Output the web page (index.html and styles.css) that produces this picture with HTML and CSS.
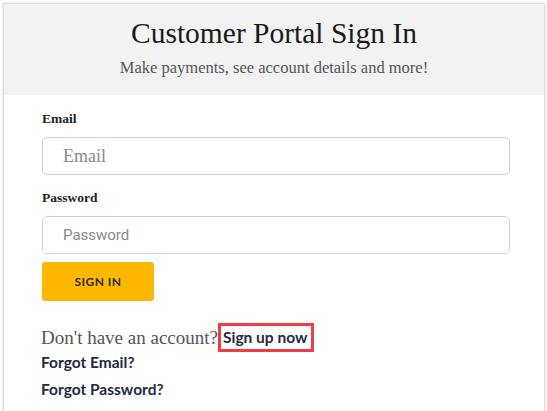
FILE: index.html
```html
<!DOCTYPE html>
<html lang="en-US">
<head>
  <meta charset="UTF-8">
  <title>Customer Portal Sign In</title>
  <link rel="stylesheet" href="styles.css">
</head>
<body>

  <div class="portal-card">
    <header class="portal-head">
      <h1>Customer Portal Sign In</h1>
      <p>Make payments, see account details and more!</p>
    </header>

    <form class="portal-form" action="" onsubmit="return false;">
      <label for="email">Email</label>
      <input id="email" class="field field-email" type="text" placeholder="Email">

      <label for="password">Password</label>
      <input id="password" class="field field-password" type="password" placeholder="Password">

      <button type="submit" class="btn-sign-in">SIGN IN</button>

      <p class="signup-line">
        Don't have an account?<a href="" class="signup-link">Sign up now</a>
      </p>
      <a href="" class="forgot-link">Forgot Email?</a>
      <a href="" class="forgot-link">Forgot Password?</a>
    </form>
  </div>

</body>
</html>
```

FILE: styles.css
```css
body {
  margin: 0;
  background: #fff;
  font-family: "Liberation Serif", serif;
  color: #222;
}
.portal-card {
  margin: 3px 2px 0 3px;
  border: 1px solid #dcdcdc;
  border-bottom: none;
  box-shadow: 0 0 3px rgba(0, 0, 0, 0.15);
  min-height: 420px;
  background: #fff;
}
.portal-head {
  background: #f2f2f2;
  text-align: center;
  padding: 12px 0 17px;
}
.portal-head h1 {
  margin: 0;
  font-size: 29.5px;
  font-weight: normal;
  color: #1a1a1a;
  line-height: 34px;
}
.portal-head p {
  margin: 8px 0 0;
  font-size: 16.5px;
  color: #555;
  line-height: 20px;
}
.portal-form {
  display: flex;
  flex-direction: column;
  align-items: flex-start;
  padding: 16px 34px 0 38px;
}
.portal-form label {
  font-size: 13.5px;
  font-weight: bold;
  color: #222;
  line-height: 16px;
  margin-bottom: 10px;
}
.field {
  box-sizing: border-box;
  width: 100%;
  height: 38px;
  margin: 0 0 15px;
  border: 1px solid #d2d2d2;
  border-radius: 5px;
  padding: 0 20px;
  background: #fff;
}
.field-email {
  font-family: "Liberation Serif", serif;
  font-size: 18px;
}
.field-password {
  font-family: Roboto, sans-serif;
  font-size: 15px;
  margin-bottom: 8px;
}
.field::placeholder {
  color: #8a8a8a;
}
.btn-sign-in {
  width: 112px;
  height: 39px;
  border: none;
  border-radius: 3px;
  background: #ffb800;
  color: #2a2a1a;
  font-family: Lato, sans-serif;
  font-weight: bold;
  font-size: 12px;
  letter-spacing: 0.04em;
  cursor: pointer;
}
.signup-line {
  margin: 22px 0 0 -1px;
  font-size: 19px;
  color: #555;
  line-height: 23px;
  display: flex;
  align-items: center;
}
.signup-link {
  font-family: Lato, sans-serif;
  font-weight: bold;
  font-size: 15.5px;
  color: #1f2a44;
  text-decoration: none;
  border: 3px solid #f03c45;
  padding: 0 4px 0 2px;
  line-height: 23px;
}
.forgot-link {
  font-family: Lato, sans-serif;
  font-weight: bold;
  font-size: 15.5px;
  color: #1f2a44;
  text-decoration: none;
  line-height: 18px;
  margin: 1px 0 0 -1px;
}
.forgot-link + .forgot-link {
  margin-top: 9px;
}
```
